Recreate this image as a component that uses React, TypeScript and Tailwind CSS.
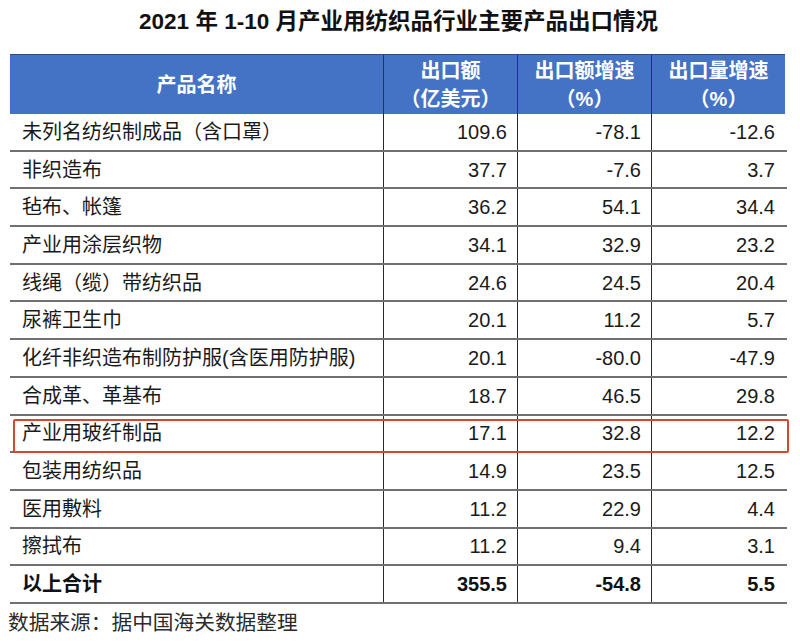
import React from "react"

type Row = {
  name: string
  value: string
  valueGrowth: string
  volumeGrowth: string
  highlight?: boolean
  total?: boolean
}

const rows: Row[] = [
  { name: "未列名纺织制成品（含口罩）", value: "109.6", valueGrowth: "-78.1", volumeGrowth: "-12.6" },
  { name: "非织造布", value: "37.7", valueGrowth: "-7.6", volumeGrowth: "3.7" },
  { name: "毡布、帐篷", value: "36.2", valueGrowth: "54.1", volumeGrowth: "34.4" },
  { name: "产业用涂层织物", value: "34.1", valueGrowth: "32.9", volumeGrowth: "23.2" },
  { name: "线绳（缆）带纺织品", value: "24.6", valueGrowth: "24.5", volumeGrowth: "20.4" },
  { name: "尿裤卫生巾", value: "20.1", valueGrowth: "11.2", volumeGrowth: "5.7" },
  { name: "化纤非织造布制防护服(含医用防护服)", value: "20.1", valueGrowth: "-80.0", volumeGrowth: "-47.9" },
  { name: "合成革、革基布", value: "18.7", valueGrowth: "46.5", volumeGrowth: "29.8" },
  { name: "产业用玻纤制品", value: "17.1", valueGrowth: "32.8", volumeGrowth: "12.2", highlight: true },
  { name: "包装用纺织品", value: "14.9", valueGrowth: "23.5", volumeGrowth: "12.5" },
  { name: "医用敷料", value: "11.2", valueGrowth: "22.9", volumeGrowth: "4.4" },
  { name: "擦拭布", value: "11.2", valueGrowth: "9.4", volumeGrowth: "3.1" },
  { name: "以上合计", value: "355.5", valueGrowth: "-54.8", volumeGrowth: "5.5", total: true },
]

const font = { fontFamily: '"Liberation Sans", "Noto Sans CJK SC", sans-serif' }

export default function App() {
  return (
    <div className="w-[800px] h-[643px] bg-white text-[#1a1a1a]" style={font}>
      {/* Title */}
      <div className="h-[54px] flex justify-center pt-[7px] pr-[3px]">
        <h1 className="text-[22.5px] font-bold leading-[30px] text-[#111]">
          2021 年 1-10 月产业用纺织品行业主要产品出口情况
        </h1>
      </div>

      <div className="ml-[10px] w-[777px]">
        {/* Header */}
        <div className="grid grid-cols-[373px_134px_134px_134px] h-[60px] w-[775px] bg-[#4472c4] border-t border-[#2b4c8c] text-white font-bold text-[20px] leading-[28px]">
          <div className="flex items-center justify-center">产品名称</div>
          <div className="flex flex-col items-center justify-center border-l border-[#1f3562]">
            <span>出口额</span>
            <span>（亿美元）</span>
          </div>
          <div className="flex flex-col items-center justify-center border-l border-[#1f3562]">
            <span>出口额增速</span>
            <span>（%）</span>
          </div>
          <div className="flex flex-col items-center justify-center border-l border-[#1f3562]">
            <span>出口量增速</span>
            <span>（%）</span>
          </div>
        </div>

        {/* Body */}
        {rows.map((r) => (
          <div
            key={r.name}
            className={`relative grid grid-cols-[373px_134px_134px_136px] h-[37.7px] border-b-2 border-[#707070] text-[20px] ${
              r.total ? "font-bold text-[#111]" : ""
            }`}
          >
            <div className="flex items-center pl-[12px] whitespace-nowrap">{r.name}</div>
            <div className="flex items-center justify-end pr-[10px] border-l border-[#2a2a2a]">{r.value}</div>
            <div className="flex items-center justify-end pr-[10px] border-l border-[#2a2a2a]">{r.valueGrowth}</div>
            <div className="flex items-center justify-end pr-[12px] border-l border-[#2a2a2a]">{r.volumeGrowth}</div>
            {r.highlight && (
              <div className="absolute left-[3px] right-[-2px] top-[3px] bottom-[-2px] border-2 border-[#d3482e] rounded-[2px]" />
            )}
          </div>
        ))}
      </div>

      {/* Source */}
      <div className="pl-[8px] pt-[5px] text-[20.7px] leading-[28px] text-[#2b2b2b]">
        数据来源：据中国海关数据整理
      </div>
    </div>
  )
}
